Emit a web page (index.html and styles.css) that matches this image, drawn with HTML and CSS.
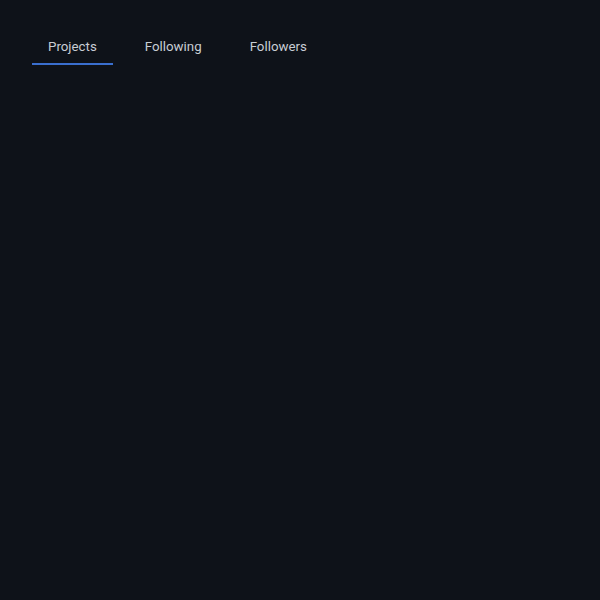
FILE: index.html
```html
<!DOCTYPE html>
<html lang="en">
<head>
    <meta charset="UTF-8">
    <meta name="viewport" content="width=device-width, initial-scale=1.0">
    <title>Profile</title>
    <link rel="stylesheet" href="styles.css">
</head>
<body>
    <div class="page">
        <nav class="tabs">
            <a href="#" class="tab active">Projects</a>
            <a href="#" class="tab">Following</a>
            <a href="#" class="tab">Followers</a>
        </nav>
        <div class="tab-content"></div>
    </div>
</body>
</html>
```

FILE: styles.css
```css
html, body{
    margin: 0; height: 100%;
    background-color: #0e1219;
}
.page{
    padding: 29px 32px 0;
    font-family: Roboto, "Liberation Sans", sans-serif;
}
.tabs{
    display: flex; gap: 16px;
}
.tab{
    display: block;
    padding: 8px 16px 6px; /*아래 밑줄 포함*/
    line-height: 20px; font-size: 13.3px;
    color: #c8cdd4; text-decoration: none;
    border-bottom: 2px solid transparent;
}
.tab.active{
    border-bottom-color: #3a6fcf;
}
```
